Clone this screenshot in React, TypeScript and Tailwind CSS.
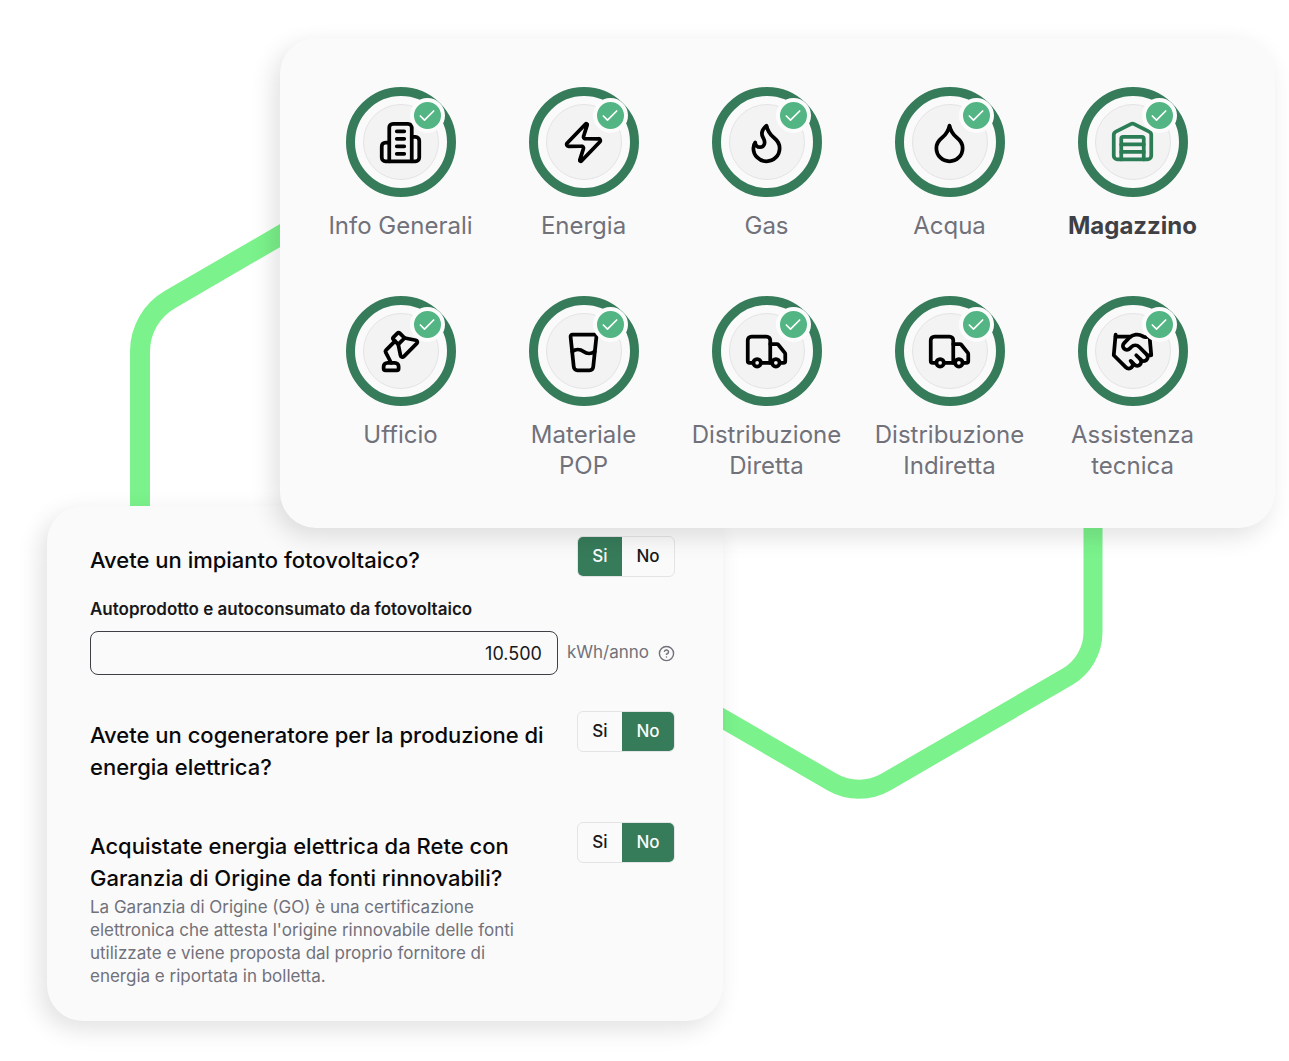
import { useState, type ReactNode } from "react";
import { Check, CircleHelp, Droplet, GlassWater, Handshake, LampDesk, Truck, Warehouse, Zap } from "lucide-react";

function BuildingIcon() {
  return (
    <svg viewBox="0 0 24 24" className="size-[45px]" fill="none" stroke="currentColor" strokeWidth="2" strokeLinecap="round" strokeLinejoin="round" aria-hidden="true">
      <path d="M6 22V4a2 2 0 0 1 2-2h8a2 2 0 0 1 2 2v18Z" />
      <path d="M6 12H4a2 2 0 0 0-2 2v6a2 2 0 0 0 2 2h2" />
      <path d="M18 9h2a2 2 0 0 1 2 2v9a2 2 0 0 1-2 2h-2" />
      <path d="M10 6h4M10 10h4M10 14h4M10 18h4" />
    </svg>
  );
}

function FlameIcon() {
  return (
    <svg viewBox="0 0 24 24" className="size-[45px]" fill="none" stroke="currentColor" strokeWidth="2" strokeLinecap="round" strokeLinejoin="round" aria-hidden="true">
      <path d="M8.5 14.5A2.5 2.5 0 0 0 11 12c0-1.38-.5-2-1-3-1.072-2.143-.224-4.054 2-6 .5 2.5 2 4.9 4 6.5 2 1.6 3 3.5 3 5.5a7 7 0 1 1-14 0c0-1.153.433-2.294 1-3a2.5 2.5 0 0 0 2.5 2.5z" />
    </svg>
  );
}

type Step = { label: string; icon: ReactNode };

const steps: Step[] = [
  { label: "Info Generali", icon: <BuildingIcon /> },
  { label: "Energia", icon: <Zap className="size-[45px]" /> },
  { label: "Gas", icon: <FlameIcon /> },
  { label: "Acqua", icon: <Droplet className="size-[45px]" /> },
  { label: "Magazzino", icon: <Warehouse className="size-[45px]" /> },
  { label: "Ufficio", icon: <LampDesk className="size-[45px]" /> },
  { label: "Materiale POP", icon: <GlassWater className="size-[45px]" /> },
  { label: "Distribuzione Diretta", icon: <Truck className="size-[45px]" /> },
  { label: "Distribuzione Indiretta", icon: <Truck className="size-[45px]" /> },
  { label: "Assistenza tecnica", icon: <Handshake className="size-[45px]" /> },
];

function StepItem({ step, active, onSelect }: { step: Step; active: boolean; onSelect: () => void }) {
  return (
    <button type="button" onClick={onSelect} aria-current={active ? "step" : undefined} className="flex flex-col items-center gap-[13px]">
      <span className="relative flex size-[110px] items-center justify-center rounded-full border-9 border-[#367b5a]">
        <span className={`flex size-[76px] items-center justify-center rounded-full border border-[#e4e4e7] bg-[#f3f3f4] ${active ? "text-[#2b7d56]" : "text-black"}`}>
          {step.icon}
        </span>
        <span className="absolute top-[2px] right-[2px] flex size-[35px] items-center justify-center rounded-full border-4 border-[#fcfcfc] bg-[#53b584] text-white">
          <Check className="size-[20px]" strokeWidth={2} />
        </span>
      </span>
      <span className={`max-w-[156px] text-center text-[24px] leading-[31px] ${active ? "font-bold text-[#3f3f46]" : "text-[#71717a]"}`}>
        {step.label}
      </span>
    </button>
  );
}

function YesNo({ label, initial }: { label: string; initial: "Si" | "No" }) {
  const [value, setValue] = useState(initial);
  return (
    <div role="group" aria-label={label} className="flex h-[41px] w-[98px] shrink-0 overflow-hidden rounded-md border border-[#e4e4e7] text-[17px] font-medium">
      <button type="button" aria-pressed={value === "Si"} onClick={() => setValue("Si")} className={`w-[44px] ${value === "Si" ? "bg-[#367b5a] text-[#fafafa]" : "text-[#18181b]"}`}>
        Si
      </button>
      <button type="button" aria-pressed={value === "No"} onClick={() => setValue("No")} className={`flex-1 ${value === "No" ? "bg-[#367b5a] text-[#fafafa]" : "text-[#18181b]"}`}>
        No
      </button>
    </div>
  );
}

function Question({ text, initial, children }: { text: string; initial: "Si" | "No"; children?: ReactNode }) {
  return (
    <div className="flex items-start gap-[18px]">
      <div className="flex-1 pt-2">
        <h2 className="text-[22px] leading-8 font-medium text-[#09090b]">{text}</h2>
        {children}
      </div>
      <YesNo label={text} initial={initial} />
    </div>
  );
}

export default function App() {
  const [active, setActive] = useState(4);
  return (
    <main className="relative overflow-hidden bg-white pt-[38px] pb-10 font-['Inter',sans-serif]">
      <svg viewBox="0 0 1289 1061" className="absolute inset-x-0 top-0 w-full" fill="none" stroke="#7bf28b" strokeWidth="20" aria-hidden="true">
        <path d="M140 520V351A60 60 0 0 1 170 299.5L300 224" />
        <path d="M1093 510V632A52 52 0 0 1 1067 677L886 782A54 54 0 0 1 832 782L700 705.5" strokeWidth="19" />
      </svg>

      <section aria-label="Sezioni" className="relative z-10 mr-[14px] ml-[280px] grid grid-cols-5 gap-y-[55px] rounded-[36px] bg-[#fafafa] pt-[49px] pr-[51px] pb-[47px] pl-[29px] shadow-[-6px_8px_24px_rgba(0,0,0,0.12)]">
        {steps.map((step, i) => (
          <StepItem key={step.label} step={step} active={i === active} onSelect={() => setActive(i)} />
        ))}
      </section>

      <form className="relative mt-[-22px] ml-[47px] max-w-[676px] rounded-[36px] bg-[#fafafa] pt-[30px] pr-[48px] pb-[33px] pl-[43px] shadow-[-6px_8px_24px_rgba(0,0,0,0.12)]">
        <Question text="Avete un impianto fotovoltaico?" initial="Si" />
        <label htmlFor="autoprodotto" className="mt-5 block text-[17px] leading-6 font-semibold text-[#18181b]">
          Autoprodotto e autoconsumato da fotovoltaico
        </label>
        <div className="mt-[10px] mb-9 flex items-center gap-[9px]">
          <input id="autoprodotto" type="text" defaultValue="10.500" className="h-[44px] min-w-0 flex-1 rounded-lg border border-[#3f3f46] px-[15px] text-right text-[18px] text-[#18181b]" />
          <span className="text-[17px] text-[#71717a]">kWh/anno</span>
          <CircleHelp className="size-[17px] text-[#71717a]" />
        </div>
        <div className="flex flex-col gap-[39px]">
          <Question text="Avete un cogeneratore per la produzione di energia elettrica?" initial="No" />
          <Question text="Acquistate energia elettrica da Rete con Garanzia di Origine da fonti rinnovabili?" initial="No">
            <p className="mt-[2px] max-w-[446px] text-[17px] leading-[23px] text-[#71717a]">
              La Garanzia di Origine (GO) è una certificazione elettronica che attesta l'origine rinnovabile delle fonti utilizzate e viene proposta dal proprio fornitore di energia e riportata in bolletta.
            </p>
          </Question>
        </div>
      </form>
    </main>
  );
}
